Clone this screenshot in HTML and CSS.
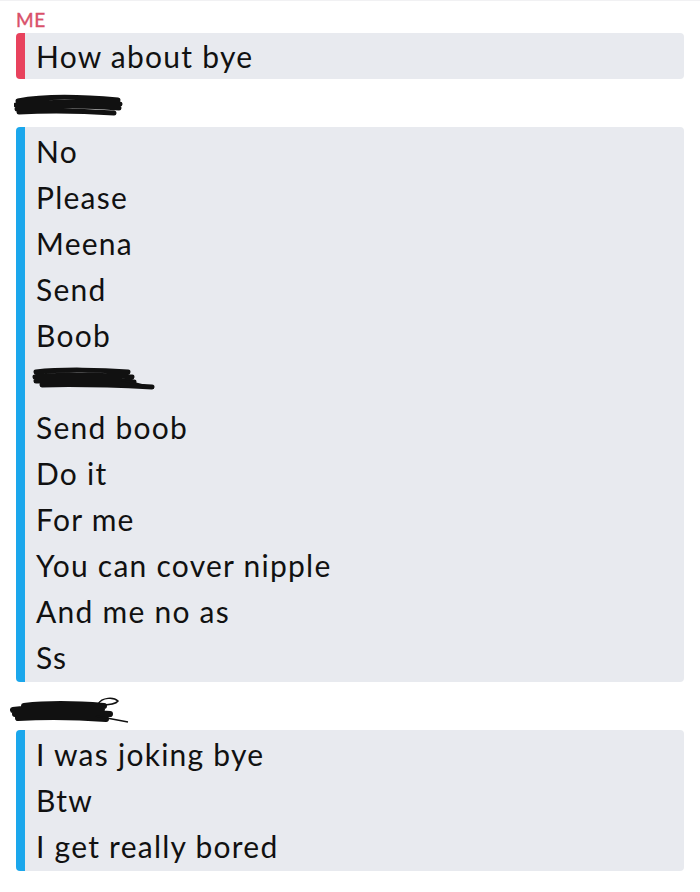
FILE: index.html
```html
<!DOCTYPE html>
<html lang="en">
<head>
<meta charset="utf-8">
<title>Chat</title>
<link rel="stylesheet" href="styles.css">
</head>
<body>
<div class="chat">
  <div class="sender sender-me">ME</div>
  <div class="msg msg-me">
    <div class="line">How about bye</div>
  </div>

  <div class="sender sender-redacted">
    <svg class="scribble s1" width="110" height="24" viewBox="0 0 110 24">
      <path d="M4 8 C30 3 70 4 104 7 M2 12 C35 8 75 9 106 11 M3 16 C40 12 80 13 105 15 M5 19 C40 17 70 18 100 20" stroke="#111" stroke-width="5" fill="none" stroke-linecap="round"/>
    </svg>
  </div>
  <div class="msg msg-them">
    <div class="line">No</div>
    <div class="line">Please</div>
    <div class="line">Meena</div>
    <div class="line">Send</div>
    <div class="line">Boob</div>
    <div class="line line-redacted">
      <svg class="scribble s2" width="124" height="26" viewBox="0 0 124 26">
        <path d="M4 6 C30 3 70 4 96 6 M3 11 C35 8 80 9 100 11 M4 15 C40 13 80 14 102 16 M10 19 C40 18 80 19 120 21" stroke="#111" stroke-width="5" fill="none" stroke-linecap="round"/>
        <path d="M90 14 L122 22" stroke="#111" stroke-width="2" fill="none"/>
      </svg>
    </div>
    <div class="line">Send boob</div>
    <div class="line">Do it</div>
    <div class="line">For me</div>
    <div class="line">You can cover nipple</div>
    <div class="line">And me no as</div>
    <div class="line">Ss</div>
  </div>

  <div class="sender sender-redacted sender-redacted-2">
    <svg class="scribble s3" width="122" height="34" viewBox="0 0 122 34">
      <path d="M3 18 C30 14 60 15 92 17 M5 22 C35 19 70 20 100 22 M8 26 C40 24 70 25 96 27 M14 14 C40 11 70 12 94 14" stroke="#111" stroke-width="6" fill="none" stroke-linecap="round"/>
      <path d="M86 24 L118 30 M88 12 C92 5 104 5 108 9 C106 12 96 13 90 13" stroke="#111" stroke-width="1.5" fill="none"/>
    </svg>
  </div>
  <div class="msg msg-them msg-last">
    <div class="line">I was joking bye</div>
    <div class="line">Btw</div>
    <div class="line">I get really bored</div>
  </div>
</div>
</body>
</html>
```

FILE: styles.css
```css
html, body {
  margin: 0;
  padding: 0;
  background: #ffffff;
}

.chat {
  width: 700px;
  height: 892px;
  box-sizing: border-box;
  padding: 4px 16px 0 16px;
  font-family: "Lato", "Open Sans", "Liberation Sans", sans-serif;
  color: #111111;
  border-top: 1px solid #f1f1f3;
  overflow: hidden;
}

.sender {
  height: 28px;
  display: flex;
  align-items: center;
  font-size: 19px;
  font-weight: 400;
  letter-spacing: 0.5px;
}

.sender-me {
  color: #d9506a;
  height: 28px;
  -webkit-text-stroke: 0.4px #d9506a;
}

.sender-redacted {
  height: 48px;
  align-items: center;
}

.sender-redacted .scribble {
  margin-left: -2px;
  margin-top: 4px;
}

.sender-redacted-2 {
  height: 48px;
}

.sender-redacted-2 .scribble {
  margin-left: -6px;
  margin-top: 6px;
}

.msg {
  background: #e8eaef;
  border-left: 9px solid #1ba7ec;
  border-radius: 4px;
  padding: 1px 0 2px 11px;
}

.msg-me {
  border-left-color: #e8425d;
  padding: 0 0 0 11px;
}

.line {
  height: 46px;
  line-height: 46px;
  font-size: 30px;
  font-weight: 400;
  letter-spacing: 1.25px;
  white-space: nowrap;
}

.line-redacted {
  display: flex;
  align-items: center;
}

.line-redacted .scribble {
  margin-left: -4px;
  margin-top: -4px;
}
```
